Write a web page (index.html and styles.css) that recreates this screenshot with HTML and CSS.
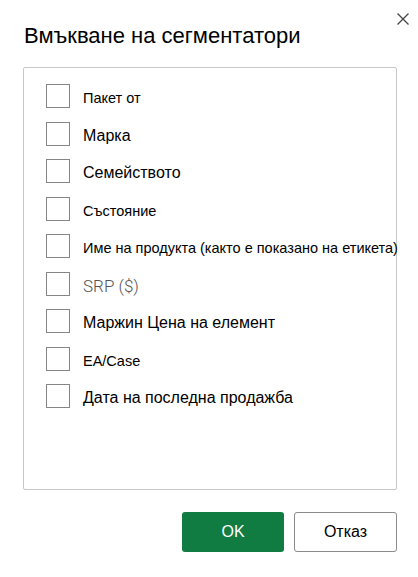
FILE: index.html
```html
<!DOCTYPE html>
<html lang="bg">
<head>
<meta charset="utf-8">
<link rel="stylesheet" href="styles.css">
</head>
<body>
<div class="dialog">
  <button class="close" aria-label="Затвори">
    <svg width="12" height="12" viewBox="0 0 12 12"><path d="M0.5 0.5 L11.5 11.5 M11.5 0.5 L0.5 11.5" stroke="#444" stroke-width="1.3" fill="none"/></svg>
  </button>
  <h1 class="title">Вмъкване на сегментатори</h1>
  <div class="list">
    <label class="row"><span class="box"></span><span class="lbl sm">Пакет от</span></label>
    <label class="row"><span class="box"></span><span class="lbl md">Марка</span></label>
    <label class="row"><span class="box"></span><span class="lbl md">Семейството</span></label>
    <label class="row"><span class="box"></span><span class="lbl sm">Състояние</span></label>
    <label class="row"><span class="box"></span><span class="lbl sm">Име на продукта (както е показано на етикета)</span></label>
    <label class="row"><span class="box"></span><span class="lbl light">SRP ($)</span></label>
    <label class="row"><span class="box"></span><span class="lbl md">Маржин Цена на елемент</span></label>
    <label class="row"><span class="box"></span><span class="lbl sm">EA/Case</span></label>
    <label class="row"><span class="box"></span><span class="lbl md">Дата на последна продажба</span></label>
  </div>
  <div class="actions">
    <button class="btn primary">OK</button>
    <button class="btn secondary">Отказ</button>
  </div>
</div>
</body>
</html>
```
FILE: styles.css
```css
html, body {
  margin: 0;
  padding: 0;
  background: #ffffff;
}
body {
  font-family: "Liberation Sans", Arial, sans-serif;
  color: #000;
}
.dialog {
  position: relative;
  width: 418px;
  height: 577px;
  box-sizing: border-box;
  padding: 23px 21px 0 23px;
}
.close {
  position: absolute;
  top: 13px;
  left: 397px;
  width: 12px;
  height: 12px;
  padding: 0;
  border: 0;
  background: none;
  display: block;
}
.close svg { display: block; }
.title {
  margin: 0 0 0 1px;
  font-weight: normal;
  font-size: 22px;
  line-height: 26px;
  height: 26px;
}
.list {
  margin-top: 18px;
  height: 423px;
  box-sizing: border-box;
  border: 1px solid #c8c8c8;
  border-radius: 2px;
  padding: 16px 0 0 22px;
  display: flex;
  flex-direction: column;
  gap: 13.5px;
}
.row {
  display: flex;
  align-items: center;
  height: 24px;
  white-space: nowrap;
}
.box {
  width: 24px;
  height: 24px;
  box-sizing: border-box;
  border: 1px solid #858585;
  flex: none;
}
.lbl {
  margin-left: 13px;
  padding-top: 4px;
}
.sm { font-size: 14.5px; }
.md { font-size: 16px; }
.light {
  font-family: Roboto, "Liberation Sans", sans-serif;
  font-weight: 300;
  font-size: 17px;
  color: #555;
}
.actions {
  display: flex;
  justify-content: flex-end;
  gap: 10px;
  margin-top: 22px;
  padding-right: 0;
}
.btn {
  height: 40px;
  box-sizing: border-box;
  font-family: "Liberation Sans", Arial, sans-serif;
  font-size: 16px;
  border-radius: 3px;
  padding: 0;
}
.primary {
  width: 102px;
  background: #107c41;
  color: #fff;
  border: 0;
}
.secondary {
  width: 103px;
  background: #fff;
  color: #000;
  border: 1px solid #8a8a8a;
}
```
